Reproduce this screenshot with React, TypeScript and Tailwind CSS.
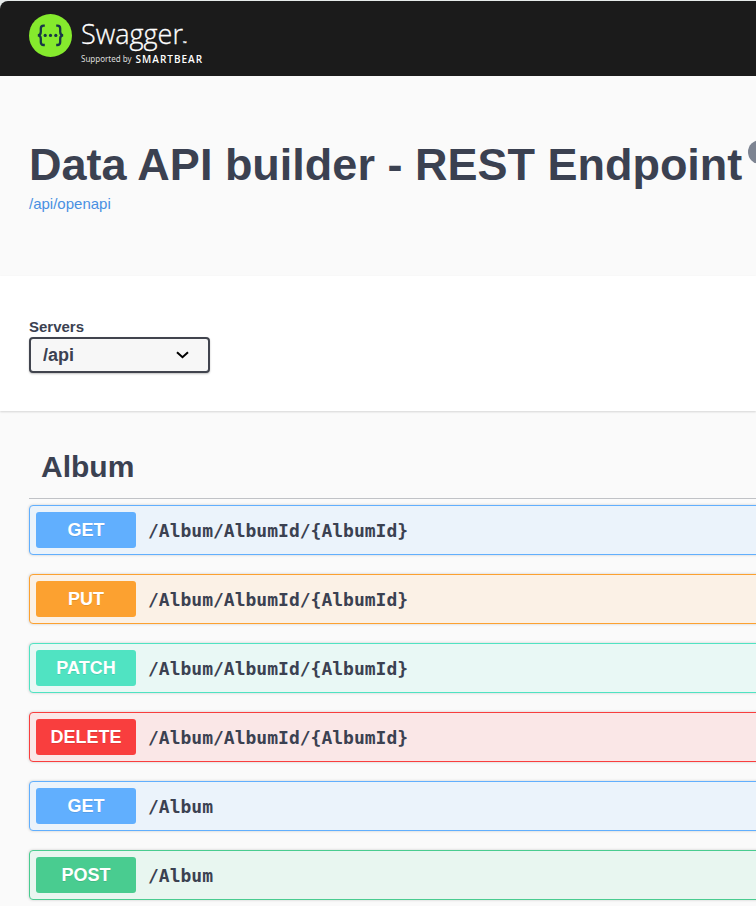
type Operation = {
  method: string;
  path: string;
  row: string;
  badge: string;
};

const get = { row: "border-[#61affe] bg-[#ebf3fb]", badge: "bg-[#61affe]" };

const operations: Operation[] = [
  { method: "GET", path: "/Album/AlbumId/{AlbumId}", ...get },
  {
    method: "PUT",
    path: "/Album/AlbumId/{AlbumId}",
    row: "border-[#fca130] bg-[#fbf1e6]",
    badge: "bg-[#fca130]",
  },
  {
    method: "PATCH",
    path: "/Album/AlbumId/{AlbumId}",
    row: "border-[#50e3c2] bg-[#e9f8f5]",
    badge: "bg-[#50e3c2]",
  },
  {
    method: "DELETE",
    path: "/Album/AlbumId/{AlbumId}",
    row: "border-[#f93e3e] bg-[#fae7e7]",
    badge: "bg-[#f93e3e]",
  },
  { method: "GET", path: "/Album", ...get },
  {
    method: "POST",
    path: "/Album",
    row: "border-[#49cc90] bg-[#e8f6f0]",
    badge: "bg-[#49cc90]",
  },
];

function SwaggerMark() {
  return (
    <svg className="size-[43px] shrink-0" viewBox="0 0 43 43" aria-hidden="true">
      <circle cx="21.5" cy="21.5" r="21.5" fill="#85ea2d" />
      <g fill="none" stroke="#173647" strokeWidth="2.3">
        <path d="M15.800 11.600h-1.200c-2 0-2.800 1-2.800 3v3.200c0 2.400-1 3.500-3 3.500 2 0 3 1.100 3 3.500v3.200c0 2 .8 3 2.800 3h1.200" />
        <path d="M27.200 11.600h1.200c2 0 2.800 1 2.800 3v3.200c0 2.400 1 3.500 3 3.500-2 0-3 1.100-3 3.500v3.200c0 2-.8 3-2.800 3h-1.200" />
      </g>
      <g fill="#173647">
        <circle cx="16.200" cy="21.400" r="1.600" />
        <circle cx="21.500" cy="21.400" r="1.600" />
        <circle cx="26.800" cy="21.400" r="1.600" />
      </g>
    </svg>
  );
}

function Logo() {
  return (
    <a href="#" className="flex w-fit items-start gap-[9px] text-white" aria-label="Swagger">
      <SwaggerMark />
      <span className="flex flex-col pt-px font-['Open_Sans','Noto_Sans',sans-serif]">
        <span className="flex items-end text-[27px] leading-[38px] font-light [-webkit-text-stroke:0.3px_white]">
          Swagger<span className="text-[5px] leading-5">™</span>
        </span>
        <span className="flex items-center gap-1 text-[8px] leading-3">
          <span className="font-['Noto_Sans',sans-serif] text-[#dddddd]">Supported by</span>
          <span className="text-[10px] font-semibold tracking-widest">SMARTBEAR</span>
        </span>
      </span>
    </a>
  );
}

function OperationRow({ method, path, row, badge }: Operation) {
  return (
    <button
      type="button"
      className={`flex h-[50px] w-full items-center gap-3 rounded border px-1.5 text-left shadow-[0_0_3px_rgba(0,0,0,0.19)] ${row}`}
    >
      <span
        className={`h-9 w-[100px] shrink-0 rounded-[3px] text-center text-[18px] leading-9 font-bold text-white [text-shadow:0_1px_0_rgba(0,0,0,0.1)] ${badge}`}
      >
        {method}
      </span>
      <span className="pt-0.5 font-['DejaVu_Sans_Mono',monospace] text-[18px] leading-6 font-bold">
        {path}
      </span>
    </button>
  );
}

export default function App() {
  return (
    <div className="min-h-screen overflow-hidden bg-[#fafafa] font-['Liberation_Sans',Arial,sans-serif] text-[#3b4151]">
      <div className="bg-[#e6ebea] pt-px">
        <header className="h-[75px] rounded-tl-lg bg-[#1b1b1b] px-[29px] pt-[13px]">
          <Logo />
        </header>
      </div>

      <section className="h-[200px] px-[29px] pt-[63px]">
        <h1 className="flex items-start gap-1.5 text-[45px] leading-[52px] font-bold whitespace-nowrap">
          Data API builder - REST Endpoint
          <span className="mt-px h-6 w-14 shrink-0 rounded-full bg-[#7d8492]" />
        </h1>
        <a href="#" className="block w-fit text-[15px] leading-[26px] text-[#4990e2]">
          /api/openapi
        </a>
      </section>

      <section className="flex h-[135px] flex-col items-start bg-white px-[29px] pt-[42px] shadow-[0_1px_2px_rgba(0,0,0,0.15)]">
        <label htmlFor="servers" className="pb-0.5 text-[15px] leading-[17px] font-bold">
          Servers
        </label>
        <div className="grid items-center">
          <select
            id="servers"
            className="col-start-1 row-start-1 h-9 w-[181px] appearance-none rounded border-2 border-[#41444e] bg-[#f7f7f7] px-3 text-[18px] font-bold shadow-[0_1px_2px_rgba(0,0,0,0.25)]"
          >
            <option>/api</option>
          </select>
          <svg
            className="pointer-events-none col-start-1 row-start-1 mr-5 h-2 w-3.5 justify-self-end"
            viewBox="0 0 14 8"
            aria-hidden="true"
          >
            <path d="M1 1.200 6.500 6.200l5.500-5" fill="none" stroke="#000" strokeWidth="2" />
          </svg>
        </div>
      </section>

      <main className="pt-8 pl-[29px]">
        <h2 className="border-b border-[#3b4151]/30 px-3 pt-1.5 pb-3.5 text-[30px] leading-[35px] font-bold">
          Album
        </h2>
        <div className="-mr-2 flex flex-col gap-[19px] pt-1.5 pb-1">
          {operations.map((op) => (
            <OperationRow key={op.method + op.path} {...op} />
          ))}
        </div>
      </main>
    </div>
  );
}
